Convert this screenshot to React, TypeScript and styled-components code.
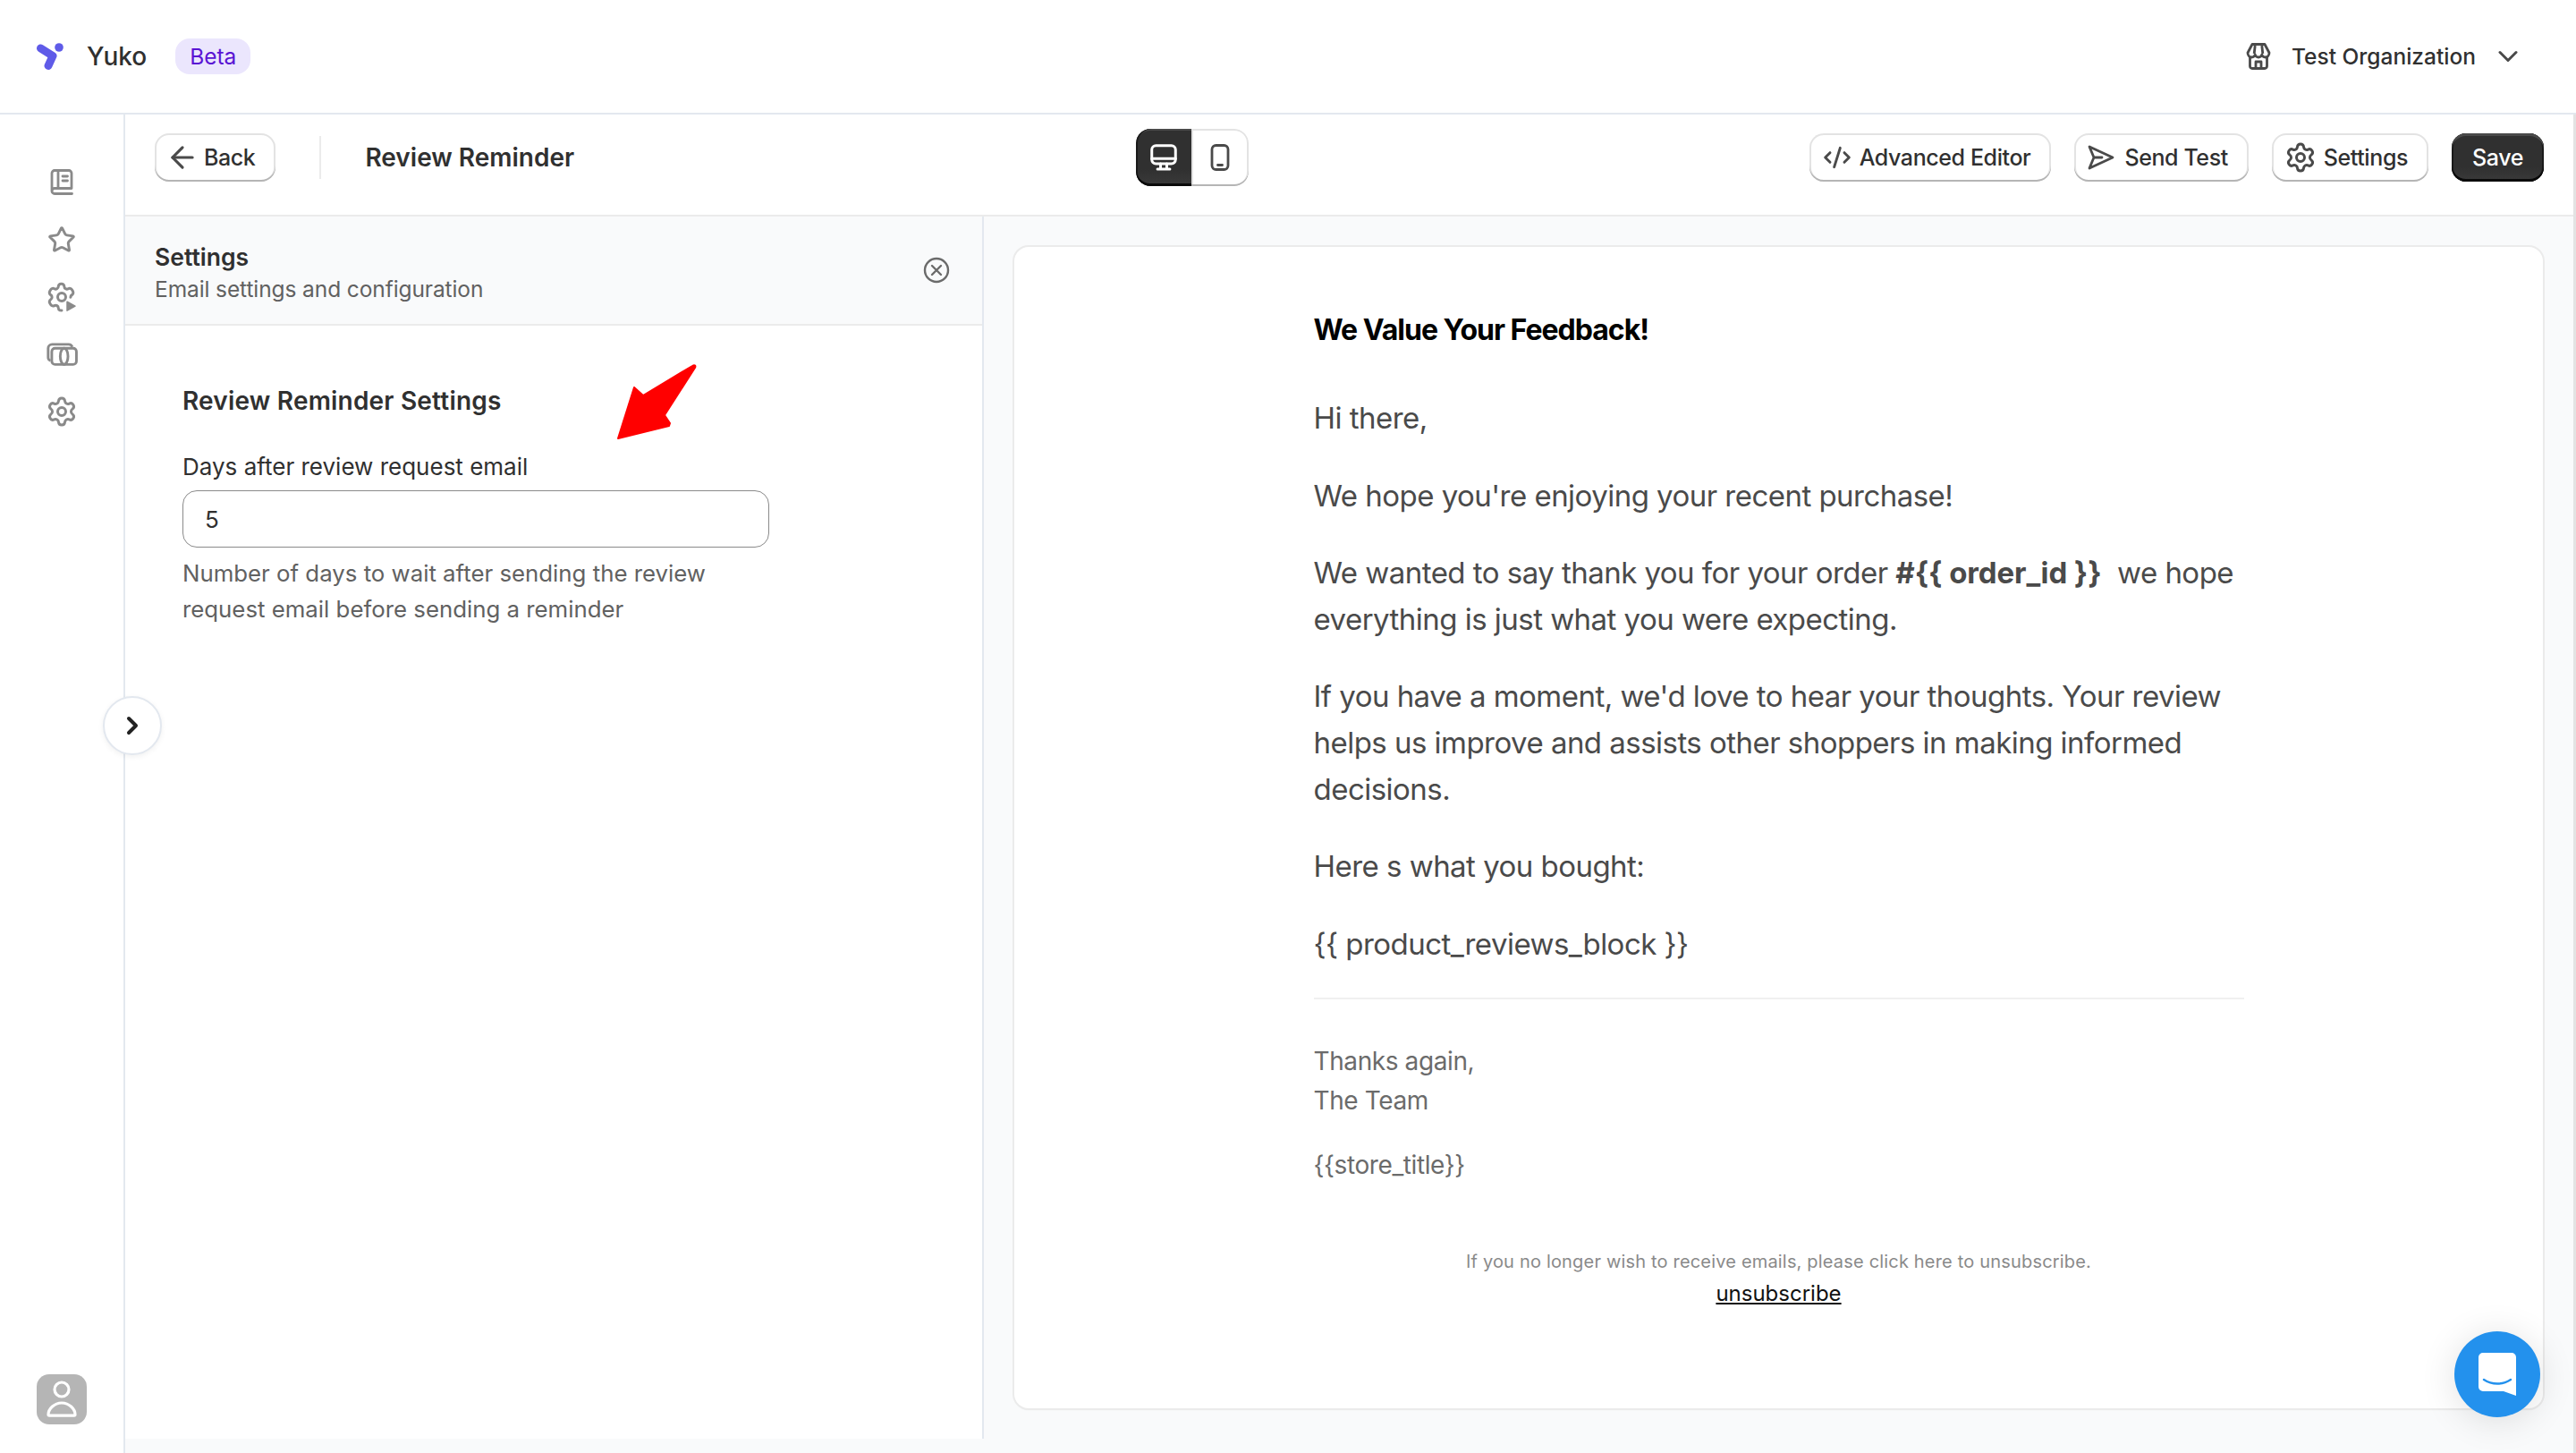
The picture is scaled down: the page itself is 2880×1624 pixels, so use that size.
import * as React from 'react';
import styled, { createGlobalStyle } from 'styled-components';
import { ArrowLeft, ChevronDown, ChevronRight, CodeXml, Settings as Gear, Star } from 'lucide-react';

const GlobalStyle = createGlobalStyle`
  html, body {
    margin: 0;
    padding: 0;
    background: #fff;
    font-family: Inter, "Liberation Sans", sans-serif;
    color: #303030;
  }
  p, h1, h2 { margin: 0; }
`
const Page = styled.div`
  position: relative;
  width: 2880px;
  height: 1624px;
  overflow: hidden;
  display: flex;
  flex-direction: column;
`
const TopBar = styled.header`
  height: 126px;
  flex: none;
  display: flex;
  align-items: center;
  justify-content: space-between;
  padding: 0 58px 0 40px;
  border-bottom: 2px solid #e3e8ef;
`
const Brand = styled.div`
  display: flex;
  align-items: center;
`
const BrandName = styled.span`
  margin-left: 25px;
  font-size: 28px;
  font-weight: 500;
`
const Badge = styled.span`
  margin-left: 32px;
  height: 40px;
  padding: 0 16px;
  display: flex;
  align-items: center;
  border-radius: 16px;
  background: #ebe6fd;
  color: #5a14d4;
  font-size: 24.5px;
`
const Org = styled.div`
  display: flex;
  align-items: center;
  color: #303030;
  font-size: 24.5px;
  font-weight: 500;
  svg { color: #4a4a4a; }
`
const OrgName = styled.span`
  margin: 0 18px 0 23px;
`
const Body = styled.div`
  flex: 1;
  display: flex;
  min-height: 0;
`
const Rail = styled.nav`
  width: 138px;
  flex: none;
  display: flex;
  flex-direction: column;
  align-items: center;
  padding: 44px 0 32px;
  border-right: 2px solid #e3e8ef;
`
const RailItem = styled.div`
  height: 64px;
  display: flex;
  align-items: center;
  justify-content: center;
  color: #8a8a8a;
`
const Avatar = styled.div`
  margin-top: auto;
  width: 56px;
  height: 56px;
  border-radius: 14px;
  background: #b5b5b5;
  display: flex;
  align-items: center;
  justify-content: center;
`
const Main = styled.main`
  flex: 1;
  display: flex;
  flex-direction: column;
  min-width: 0;
  border-right: 3px solid #e3e3e3;
`
const Toolbar = styled.div`
  height: 114px;
  box-sizing: border-box;
  flex: none;
  display: grid;
  grid-template-columns: 1097px auto 1fr;
  align-items: center;
  padding: 0 33px 16px 33px;
  border-bottom: 2px solid #ebebeb;
`
const ToolGroup = styled.div<{ $end?: boolean }>`
  display: flex;
  align-items: center;
  justify-content: ${p => (p.$end ? 'flex-end' : 'flex-start')};
  gap: 26px;
`
const Button = styled.button<{ $primary?: boolean; $left?: number; $gap?: number }>`
  height: 54px;
  padding: 0 23px 0 ${p => p.$left ?? 24}px;
  display: flex;
  align-items: center;
  gap: ${p => p.$gap ?? 8}px;
  border: 0;
  border-radius: 16px;
  font: 500 25px Inter, "Liberation Sans", sans-serif;
  letter-spacing: -0.4px;
  color: ${p => (p.$primary ? '#fff' : '#303030')};
  background: ${p => (p.$primary ? 'linear-gradient(#303030 70%, #3a3a3a)' : '#fff')};
  box-shadow: ${p =>
    p.$primary
      ? 'inset 0 -3px 0 #0a0a0a, inset 0 3px 0 #4a4a4a, inset 0 0 0 2px #1a1a1a'
      : 'inset 0 -2px 0 #b5b5b5, inset 0 0 0 2px #e3e3e3'};
  svg { color: #4a4a4a; flex: none; }
`
const Divider = styled.span`
  width: 2px;
  height: 48px;
  margin: 0 23px 0 23px;
  background: #ebebeb;
`
const PageTitle = styled.h1`
  font-size: 28px;
  font-weight: 600;
`
const Toggle = styled.div`
  display: flex;
  height: 64px;
  border-radius: 16px;
  overflow: hidden;
`
const ToggleOption = styled.div<{ $active?: boolean }>`
  width: ${p => (p.$active ? 62 : 64)}px;
  display: flex;
  align-items: center;
  justify-content: center;
  color: ${p => (p.$active ? '#fff' : '#4a4a4a')};
  background: ${p => (p.$active ? 'linear-gradient(#303030 70%, #3a3a3a)' : '#fff')};
  box-shadow: ${p =>
    p.$active
      ? 'inset 0 -3px 0 #0a0a0a, inset 2px 0 0 #1a1a1a, inset 0 2px 0 #4a4a4a'
      : 'inset 0 -2px 0 #b5b5b5, inset 0 0 0 2px #e3e3e3'};
  border-radius: ${p => (p.$active ? '16px 0 0 16px' : '0 16px 16px 0')};
`
const Columns = styled.div`
  flex: 1;
  display: flex;
  min-height: 0;
  background: #f9fafb;
`
const SidePanel = styled.aside`
  width: 958px;
  flex: none;
  margin-bottom: 16px;
  background: #fff;
  border-right: 2px solid #e3e8ef;
`
const PanelHead = styled.div`
  height: 120px;
  box-sizing: content-box;
  display: flex;
  align-items: center;
  justify-content: space-between;
  padding: 0 36px 0 33px;
  background: #f9fafb;
  border-bottom: 2px solid #ebebeb;
  svg { color: #6b6b6b; }
`
const PanelHeadText = styled.div`
  padding-top: 5px;
`
const PanelTitle = styled.h2`
  font-size: 26.5px;
  font-weight: 600;
  line-height: 36px;
`
const PanelSubtitle = styled.p`
  font-size: 24.5px;
  line-height: 36px;
  letter-spacing: -0.1px;
  color: #616161;
`
const PanelBody = styled.div`
  padding: 64px 0 0 64px;
`
const SectionTitle = styled.h2`
  font-size: 28px;
  font-weight: 600;
  line-height: 40px;
  letter-spacing: 0.2px;
`
const Label = styled.label`
  display: block;
  margin-top: 34px;
  font-size: 26px;
  line-height: 40px;
`
const Input = styled.input`
  display: block;
  box-sizing: border-box;
  width: 656px;
  height: 64px;
  margin-top: 6px;
  padding: 0 24px;
  border: 1.5px solid #8a8a8a;
  border-radius: 16px;
  font: 400 26px Inter, "Liberation Sans", sans-serif;
  color: #303030;
`
const HelpText = styled.p`
  width: 640px;
  margin-top: 9px;
  font-size: 25.8px;
  line-height: 40px;
  color: #616161;
`
const Preview = styled.section`
  flex: 1;
  min-width: 0;
  padding: 34px 34px 50px 34px;
`
const EmailCard = styled.article`
  height: 100%;
  box-sizing: border-box;
  padding: 70px 0 0;
  border-radius: 16px;
  background: #fff;
  box-shadow: 0 0 0 2px #ebebeb, 0 2px 2px rgba(0, 0, 0, 0.06);
  display: flex;
  flex-direction: column;
  align-items: center;
`
const EmailColumn = styled.div`
  width: 1040px;
`
const EmailHeading = styled.h2`
  margin-bottom: 50px;
  font-size: 32px;
  font-weight: 700;
  line-height: 46px;
  color: #000;
  letter-spacing: -1px;
`
const EmailText = styled.p`
  margin-top: 35px;
  font-size: 33px;
  line-height: 51.6px;
  color: #4a4a4a;
  letter-spacing: -0.53px;
  b { font-weight: 700; letter-spacing: -0.1px; }
`
const Rule = styled.hr`
  margin: 34px 0 0;
  border: 0;
  height: 2px;
  background: #f0f0f0;
`
const Signoff = styled.p<{ $top: number }>`
  margin-top: ${p => p.$top}px;
  font-size: 28px;
  line-height: 44px;
  letter-spacing: -0.4px;
  color: #6b6b6b;
`
const FooterNote = styled.p`
  margin-top: 72px;
  font-size: 20px;
  line-height: 28px;
  letter-spacing: 0.18px;
  text-align: center;
  color: #8a8a8a;
`
const Unsubscribe = styled.a`
  display: block;
  margin-top: 6px;
  font-size: 24px;
  line-height: 32px;
  text-align: center;
  color: #111;
  text-decoration: underline;
`
const CollapseButton = styled.div`
  position: absolute;
  left: 115px;
  top: 778px;
  box-sizing: border-box;
  width: 66px;
  height: 66px;
  border-radius: 50%;
  background: #fff;
  border: 2px solid #e3e8ef;
  box-shadow: 0 2px 6px rgba(0, 0, 0, 0.06);
  display: flex;
  align-items: center;
  justify-content: center;
  color: #222;
`
const ChatBubble = styled.div`
  position: absolute;
  left: 2744px;
  top: 1488px;
  width: 96px;
  height: 96px;
  border-radius: 50%;
  background: #2391ed;
  box-shadow: 0 4px 40px rgba(0, 0, 0, 0.12);
  display: flex;
  align-items: center;
  justify-content: center;
`
const Annotation = styled.svg`
  position: absolute;
  left: 680px;
  top: 400px;
`

const LogoMark = () => (
  <svg width="32" height="32" viewBox="0 0 32 32" fill="none">
    <path d="M5.500 7L19 15.500 14 26.500" stroke="#5f5be8" strokeWidth="9" strokeLinecap="round" strokeLinejoin="round" />
    <circle cx="26" cy="6" r="4.800" fill="#5f5be8" />
  </svg>
)
const StoreIcon = () => (
  <svg width="28" height="30" viewBox="0 0 28 30" fill="none" stroke="currentColor" strokeWidth="2.800" strokeLinejoin="round">
    <path d="M7 1.500h14l5 9.500c0 3-2 5-4.200 5-2.200 0-3.600-1.200-4-3-.5 1.800-2 3-3.800 3s-3.300-1.200-3.800-3c-.4 1.800-1.800 3-4 3C4 16 2 14 2 11z" />
    <path d="M4.500 16v10a2.500 2.500 0 0 0 2.500 2.500h14a2.500 2.500 0 0 0 2.500-2.500V16M11 28.500V21h6v7.500M10.200 3l-1 9M17.800 3l1 9" />
  </svg>
)
const BookIcon = () => (
  <svg width="26" height="30" viewBox="0 0 26 30" fill="none" stroke="currentColor" strokeWidth="2.800" strokeLinecap="round" strokeLinejoin="round">
    <path d="M2 24.500V4.500A3 3 0 0 1 5 1.500h16a3 3 0 0 1 3 3v17H5a3 3 0 0 0-3 3 3 3 0 0 0 3 3h19.500" />
    <path d="M9 2v19M14 8h5.500M14 13h5.500" />
  </svg>
)
const AutomationGear = () => (
  <svg width="36" height="36" viewBox="0 0 24 24" fill="none" stroke="currentColor" strokeWidth="2" strokeLinecap="round" strokeLinejoin="round">
    <circle cx="12" cy="12" r="3" />
    <path d="M12 22l-1.300-.1a2 2 0 0 1-1.200-1.800 2 2 0 0 0-3-1.700 2 2 0 0 1-2.700-.7l-.7-1.200a2 2 0 0 1 .7-2.700 2 2 0 0 0 0-3.400 2 2 0 0 1-.7-2.700l.7-1.200a2 2 0 0 1 2.700-.7 2 2 0 0 0 3-1.700 2 2 0 0 1 2-2h.4a2 2 0 0 1 2 2 2 2 0 0 0 3 1.700 2 2 0 0 1 2.700.7l.7 1.200a2 2 0 0 1-.7 2.700 2 2 0 0 0-1 1.700" />
    <path d="M16 15.500l6 3.300-6 3.300z" fill="currentColor" strokeWidth="1" />
  </svg>
)
const CashIcon = () => (
  <svg width="35" height="29" viewBox="0 0 24 20" fill="none" stroke="currentColor" strokeWidth="2" strokeLinejoin="round">
    <path d="M3 14.500A2.500 2.500 0 0 1 1.200 12V5A3 3 0 0 1 4.200 2H17a3 3 0 0 1 2.800 2" />
    <rect x="4" y="5" width="19" height="12.500" rx="2.500" />
    <ellipse cx="13.500" cy="11.200" rx="3" ry="6.200" />
  </svg>
)
const SendIcon = () => (
  <svg width="30" height="28" viewBox="0 0 30 28" fill="none" stroke="currentColor" strokeWidth="2.800" strokeLinejoin="round" strokeLinecap="round">
    <path d="M2 2L28 14 2 26 7 14zM7 14h9" />
  </svg>
)
const DesktopIcon = () => (
  <svg width="30" height="30" viewBox="0 0 26 26" fill="none" stroke="currentColor" strokeWidth="2.600" strokeLinecap="round" strokeLinejoin="round">
    <rect x="1.500" y="1.500" width="23" height="17.500" rx="4" />
    <path d="M1.500 14h23M10 19v5M16 19v5M7 24.200h12" />
  </svg>
)
const PhoneIcon = () => (
  <svg width="30" height="30" viewBox="0 0 26 30" fill="none" stroke="currentColor" strokeWidth="2.800" strokeLinecap="round">
    <rect x="4" y="1.500" width="18" height="27" rx="4.500" />
    <path d="M10.500 23.500h5" />
  </svg>
)
const CloseCircle = () => (
  <svg width="30" height="30" viewBox="0 0 30 30" fill="none" stroke="currentColor" strokeWidth="2.400" strokeLinecap="round">
    <circle cx="15" cy="15" r="13" />
    <path d="M10 10l10 10M20 10L10 20" />
  </svg>
)
const PersonIcon = () => (
  <svg width="36" height="42" viewBox="0 0 36 42" fill="none" stroke="#fff" strokeWidth="3.200" strokeLinejoin="round">
    <circle cx="18" cy="10" r="8" />
    <path d="M3 38c0-6 6.500-13 15-13s15 7 15 13c0 .8-.6 1.200-1.200 1.200H4.200C3.600 39.200 3 38.800 3 38z" />
  </svg>
)
const ChatIcon = () => (
  <svg width="42" height="48" viewBox="0 0 42 48">
    <path d="M5 0h32a5 5 0 0 1 5 5v43l-14-5H5a5 5 0 0 1-5-5V5a5 5 0 0 1 5-5z" fill="#fff" />
    <path d="M6 30c9 6 21 6 30 0" fill="none" stroke="#2391ed" strokeWidth="2.400" strokeLinecap="round" />
  </svg>
)

const EMAIL_PARAGRAPHS = [
  <>Hi there,</>,
  <>We hope you're enjoying your recent purchase!</>,
  <>We wanted to say thank you for your order <b>#{'{{'} order_id {'}}'}</b>&nbsp; we hope everything is just what you were expecting.</>,
  <>If you have a moment, we'd love to hear your thoughts. Your review helps us improve and assists other shoppers in making informed decisions.</>,
  <>Here s what you bought:</>,
  <>{'{{'} product_reviews_block {'}}'}</>,
];

const App: React.FC = () => {
  return (
    <Page>
      <GlobalStyle />
      <TopBar>
        <Brand>
          <LogoMark />
          <BrandName>Yuko</BrandName>
          <Badge>Beta</Badge>
        </Brand>
        <Org>
          <StoreIcon />
          <OrgName>Test Organization</OrgName>
          <ChevronDown size={36} strokeWidth={2} />
        </Org>
      </TopBar>
      <Body>
        <Rail>
          <RailItem><BookIcon /></RailItem>
          <RailItem><Star size={32} strokeWidth={2.2} /></RailItem>
          <RailItem><AutomationGear /></RailItem>
          <RailItem><CashIcon /></RailItem>
          <RailItem><Gear size={36} strokeWidth={2} /></RailItem>
          <Avatar><PersonIcon /></Avatar>
        </Rail>
        <Main>
          <Toolbar>
            <ToolGroup>
              <Button $left={12} $gap={5}><ArrowLeft size={38} strokeWidth={2} />Back</Button>
              <Divider />
              <PageTitle>Review Reminder</PageTitle>
            </ToolGroup>
            <Toggle>
              <ToggleOption $active><DesktopIcon /></ToggleOption>
              <ToggleOption><PhoneIcon /></ToggleOption>
            </Toggle>
            <ToolGroup $end>
              <Button $left={15} $gap={9}><CodeXml size={32} strokeWidth={2.2} />Advanced Editor</Button>
              <Button $left={15} $gap={11}><SendIcon />Send Test</Button>
              <Button $left={14} $gap={8}><Gear size={36} strokeWidth={2} />Settings</Button>
              <Button $primary $left={23}>Save</Button>
            </ToolGroup>
          </Toolbar>
          <Columns>
            <SidePanel>
              <PanelHead>
                <PanelHeadText>
                  <PanelTitle>Settings</PanelTitle>
                  <PanelSubtitle>Email settings and configuration</PanelSubtitle>
                </PanelHeadText>
                <CloseCircle />
              </PanelHead>
              <PanelBody>
                <SectionTitle>Review Reminder Settings</SectionTitle>
                <Label>Days after review request email</Label>
                <Input defaultValue="5" />
                <HelpText>Number of days to wait after sending the review request email before sending a reminder</HelpText>
              </PanelBody>
            </SidePanel>
            <Preview>
              <EmailCard>
                <EmailColumn>
                  <EmailHeading>We Value Your Feedback!</EmailHeading>
                  {EMAIL_PARAGRAPHS.map((text, i) => <EmailText key={i}>{text}</EmailText>)}
                  <Rule />
                  <Signoff $top={47}>Thanks again,<br />The Team</Signoff>
                  <Signoff $top={28}>{'{{store_title}}'}</Signoff>
                  <FooterNote>If you no longer wish to receive emails, please click here to unsubscribe.</FooterNote>
                  <Unsubscribe>unsubscribe</Unsubscribe>
                </EmailColumn>
              </EmailCard>
            </Preview>
          </Columns>
        </Main>
      </Body>
      <CollapseButton><ChevronRight size={32} strokeWidth={3} /></CollapseButton>
      <ChatBubble><ChatIcon /></ChatBubble>
      <Annotation width="110" height="100" viewBox="0 0 110 100">
        <path d="M11 90L29 33l10 9L94 9c3-2 4 0 3 2L63 64l6 9-1 3z" fill="#ff0000" stroke="#ff0000" strokeWidth="2" strokeLinejoin="round" />
      </Annotation>
    </Page>
  );
};

export default App;
